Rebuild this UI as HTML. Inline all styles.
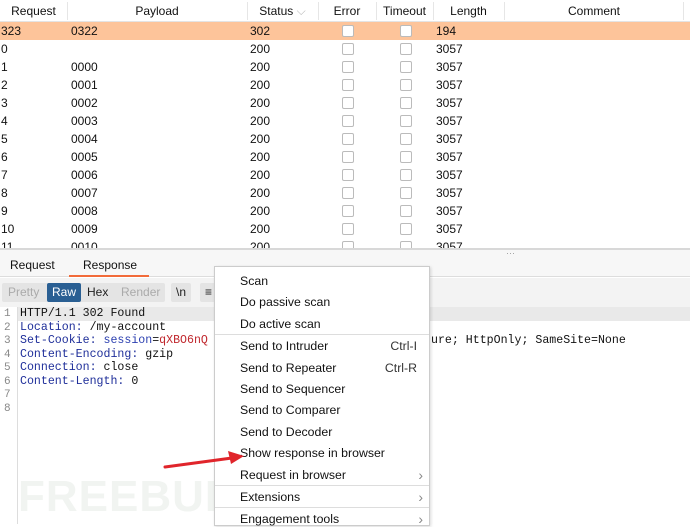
<!DOCTYPE html><html><head><style>
*{margin:0;padding:0;box-sizing:border-box}
body{width:690px;height:524px;overflow:hidden;background:#fff;font-family:"Liberation Sans",sans-serif;font-size:12px;color:#111;position:relative}
.a{position:absolute;white-space:nowrap}
.hd{position:absolute;top:0;left:0;width:690px;height:22px;background:#fff;border-bottom:1px solid #e4e4e4}
.hd span{position:absolute;top:4px;text-align:center}
.vs{position:absolute;top:2px;height:18px;width:1px;background:#e6e6e6}
.row{position:absolute;left:0;width:690px;height:18px}
.row span{position:absolute;top:2px}
.cb{position:absolute;top:3px;width:12px;height:12px;border:1px solid #bbb;border-radius:2px;background:#fff}
.code{font-family:"Liberation Mono",monospace;font-size:11.6px;position:absolute;left:20px;white-space:nowrap}
.ln{font-family:"Liberation Mono",monospace;font-size:11px;color:#888;position:absolute;left:4px}
.k{color:#1f2f9a}.m{color:#2b3fb0}.r{color:#c0272d}
.mi{position:absolute;left:25px;font-size:12.3px;color:#111}
.sc{position:absolute;right:12px;font-size:12.3px;color:#333}
.ar{position:absolute;right:6px;color:#888;font-size:14px;line-height:14px}
.sep{position:absolute;left:0;width:214px;height:1px;background:#ddd}
.btn{position:absolute;top:283px;height:19px;padding:2px 5px;font-size:12px;border-radius:2px}
</style></head><body>
<div class="hd">
<span style="left:0;width:67px">Request</span>
<span style="left:67px;width:180px">Payload</span>
<span style="left:247px;width:71px">Status <span style="position:static;color:#bbb">⌵</span></span>
<span style="left:318px;width:58px">Error</span>
<span style="left:376px;width:57px">Timeout</span>
<span style="left:433px;width:71px">Length</span>
<span style="left:504px;width:180px">Comment</span>
<div class="vs" style="left:67px"></div><div class="vs" style="left:247px"></div><div class="vs" style="left:318px"></div><div class="vs" style="left:376px"></div><div class="vs" style="left:433px"></div><div class="vs" style="left:504px"></div><div class="vs" style="left:683px"></div>
</div>
<div class="row" style="top:22px;background:#fdc49a"><span style="left:1px">323</span><span style="left:71px">0322</span><span style="left:250px">302</span><div class="cb" style="left:342px"></div><div class="cb" style="left:400px"></div><span style="left:436px">194</span></div>
<div class="row" style="top:40px"><span style="left:1px">0</span><span style="left:250px">200</span><div class="cb" style="left:342px"></div><div class="cb" style="left:400px"></div><span style="left:436px">3057</span></div>
<div class="row" style="top:58px"><span style="left:1px">1</span><span style="left:71px">0000</span><span style="left:250px">200</span><div class="cb" style="left:342px"></div><div class="cb" style="left:400px"></div><span style="left:436px">3057</span></div>
<div class="row" style="top:76px"><span style="left:1px">2</span><span style="left:71px">0001</span><span style="left:250px">200</span><div class="cb" style="left:342px"></div><div class="cb" style="left:400px"></div><span style="left:436px">3057</span></div>
<div class="row" style="top:94px"><span style="left:1px">3</span><span style="left:71px">0002</span><span style="left:250px">200</span><div class="cb" style="left:342px"></div><div class="cb" style="left:400px"></div><span style="left:436px">3057</span></div>
<div class="row" style="top:112px"><span style="left:1px">4</span><span style="left:71px">0003</span><span style="left:250px">200</span><div class="cb" style="left:342px"></div><div class="cb" style="left:400px"></div><span style="left:436px">3057</span></div>
<div class="row" style="top:130px"><span style="left:1px">5</span><span style="left:71px">0004</span><span style="left:250px">200</span><div class="cb" style="left:342px"></div><div class="cb" style="left:400px"></div><span style="left:436px">3057</span></div>
<div class="row" style="top:148px"><span style="left:1px">6</span><span style="left:71px">0005</span><span style="left:250px">200</span><div class="cb" style="left:342px"></div><div class="cb" style="left:400px"></div><span style="left:436px">3057</span></div>
<div class="row" style="top:166px"><span style="left:1px">7</span><span style="left:71px">0006</span><span style="left:250px">200</span><div class="cb" style="left:342px"></div><div class="cb" style="left:400px"></div><span style="left:436px">3057</span></div>
<div class="row" style="top:184px"><span style="left:1px">8</span><span style="left:71px">0007</span><span style="left:250px">200</span><div class="cb" style="left:342px"></div><div class="cb" style="left:400px"></div><span style="left:436px">3057</span></div>
<div class="row" style="top:202px"><span style="left:1px">9</span><span style="left:71px">0008</span><span style="left:250px">200</span><div class="cb" style="left:342px"></div><div class="cb" style="left:400px"></div><span style="left:436px">3057</span></div>
<div class="row" style="top:220px"><span style="left:1px">10</span><span style="left:71px">0009</span><span style="left:250px">200</span><div class="cb" style="left:342px"></div><div class="cb" style="left:400px"></div><span style="left:436px">3057</span></div>
<div class="row" style="top:238px;height:10px;overflow:hidden"><span style="left:1px">11</span><span style="left:71px">0010</span><span style="left:250px">200</span><div class="cb" style="left:342px"></div><div class="cb" style="left:400px"></div><span style="left:436px">3057</span></div>
<div class="a" style="top:248px;left:0;width:690px;height:2px;background:#d8d8d8"></div>
<div class="a" style="top:250px;left:0;width:690px;height:27px;background:#f7f7f7;border-bottom:1px solid #ddd"></div>
<div class="a" style="top:248px;left:506px;color:#999;font-size:9px">···</div>
<div class="a" style="top:258px;left:10px">Request</div>
<div class="a" style="top:258px;left:83px">Response</div>
<div class="a" style="top:275px;left:69px;width:80px;height:2px;background:#f26b3a"></div>
<div class="a" style="top:278px;left:0;width:690px;height:29px;background:#f3f3f3"></div>
<div class="btn" style="left:2px;width:163px;background:#e4e4e4"></div>
<div class="btn" style="left:3px;color:#aaa">Pretty</div>
<div class="btn" style="left:47px;background:#2a5f93;color:#fff">Raw</div>
<div class="btn" style="left:82px;color:#222">Hex</div>
<div class="btn" style="left:116px;color:#aaa">Render</div>
<div class="btn" style="left:171px;background:#e4e4e4;color:#222">\n</div>
<div class="btn" style="left:200px;background:#e4e4e4;color:#222;width:20px">≡</div>
<div class="a" style="top:307px;left:17px;width:673px;height:14px;background:#e9e9e9"></div>
<div class="a" style="top:307px;left:17px;width:1px;height:217px;background:#ddd"></div>
<div class="ln" style="top:308px">1</div><div class="ln" style="top:321.5px">2</div><div class="ln" style="top:335px">3</div><div class="ln" style="top:348.5px">4</div><div class="ln" style="top:362px">5</div><div class="ln" style="top:375.5px">6</div><div class="ln" style="top:389px">7</div><div class="ln" style="top:402.5px">8</div>
<div class="code" style="top:307px">HTTP/1.1 302 Found</div>
<div class="code" style="top:320.5px"><span class="k">Location:</span> /my-account</div>
<div class="code" style="top:334px"><span class="k">Set-Cookie:</span> <span class="m">session</span>=<span class="r">qXBO6nQ</span></div>
<div class="code" style="top:334px;left:431px">ure; HttpOnly; SameSite=None</div>
<div class="code" style="top:347.5px"><span class="k">Content-Encoding:</span> gzip</div>
<div class="code" style="top:361px"><span class="k">Connection:</span> close</div>
<div class="code" style="top:374.5px"><span class="k">Content-Length:</span> 0</div>
<div class="a" style="top:472px;left:18px;font-size:44px;font-weight:bold;color:#f1f4f1;letter-spacing:1px">FREEBUF</div>
<div class="a" style="top:266px;left:214px;width:216px;height:260px;background:#fff;border:1px solid #ccc;box-shadow:1px 1px 3px rgba(0,0,0,.15)">
<div class="mi" style="top:7px">Scan</div>
<div class="mi" style="top:28px">Do passive scan</div>
<div class="mi" style="top:50px">Do active scan</div>
<div class="sep" style="top:67px"></div>
<div class="mi" style="top:72px">Send to Intruder</div><div class="sc" style="top:72px">Ctrl-I</div>
<div class="mi" style="top:94px">Send to Repeater</div><div class="sc" style="top:94px">Ctrl-R</div>
<div class="mi" style="top:115px">Send to Sequencer</div>
<div class="mi" style="top:136px">Send to Comparer</div>
<div class="mi" style="top:158px">Send to Decoder</div>
<div class="mi" style="top:179px">Show response in browser</div>
<div class="mi" style="top:201px">Request in browser</div><div class="ar" style="top:201px">›</div>
<div class="sep" style="top:218px"></div>
<div class="mi" style="top:223px">Extensions</div><div class="ar" style="top:223px">›</div>
<div class="sep" style="top:240px"></div>
<div class="mi" style="top:245px">Engagement tools</div><div class="ar" style="top:245px">›</div>
</div>
<svg class="a" style="left:160px;top:448px" width="90" height="24"><path d="M5 19 L72 10" stroke="#e0252b" stroke-width="3" stroke-linecap="round"/><path d="M84 8 L68 3 L71 16 Z" fill="#e0252b"/></svg>
</body></html>
